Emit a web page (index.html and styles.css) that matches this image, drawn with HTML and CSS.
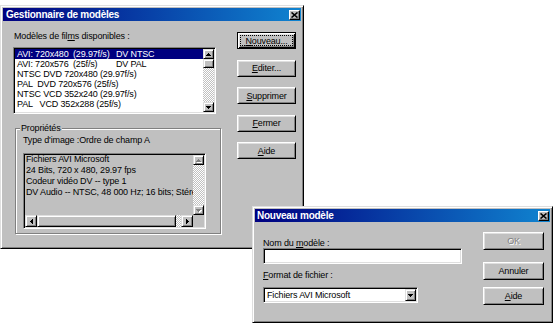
FILE: index.html
```html
<!DOCTYPE html>
<html lang="fr">
<head>
    <meta charset="UTF-8">
    <title>Gestionnaire de modèles</title>
    <link rel="stylesheet" href="styles.css">
</head>
<body>

    <div class="win main-win">
        <div class="titlebar">
            <span>Gestionnaire de modèles</span>
            <span class="close"><svg width="7" height="6" viewBox="0 0 7 6"><path d="M0.5 0.5L6.5 5.5M6.5 0.5L0.5 5.5" stroke="#000" stroke-width="1.6"/></svg></span>
        </div>
        <div class="main-body">
            <div class="left-col">
                <div class="lbl">Modèles de fil<u>m</u>s disponibles :</div>
                <div class="listbox">
                    <div class="rows">
                        <div class="row sel"><span class="c1">AVI: 720x480</span><span class="c2">(29.97f/s)</span>DV NTSC</div>
                        <div class="row"><span class="c1">AVI: 720x576</span><span class="c2">(25f/s)</span>DV PAL</div>
                        <div class="row">NTSC DVD 720x480 (29.97f/s)</div>
                        <div class="row">PAL  DVD 720x576 (25f/s)</div>
                        <div class="row">NTSC VCD 352x240 (29.97f/s)</div>
                        <div class="row">PAL   VCD 352x288 (25f/s)</div>
                    </div>
                    <div class="vscroll">
                        <div class="arrow"><svg width="5" height="3" viewBox="0 0 5 3"><path d="M2 0h1v1h1v1h1v1H0V2h1V1h1z"/></svg></div>
                        <div class="thumb"></div>
                        <div class="track"></div>
                        <div class="arrow"><svg width="5" height="3" viewBox="0 0 5 3"><path d="M0 0h5v1H4v1H3v1H2V2H1V1H0z"/></svg></div>
                    </div>
                </div>
                <fieldset class="group">
                    <legend>Propriétés</legend>
                    <div class="lbl">Type d'image :Ordre de champ A</div>
                    <div class="infobox">
                        <div class="info-text">
                            Fichiers AVI Microsoft<br>
                            24 Bits, 720 x 480, 29.97 fps<br>
                            Codeur vidéo DV -- type 1<br>
                            DV Audio -- NTSC, 48 000 Hz; 16 bits; Stéré
                        </div>
                        <div class="vscroll off">
                            <div class="arrow"><svg width="5" height="3" viewBox="0 0 5 3"><path d="M2 0h1v1h1v1h1v1H0V2h1V1h1z"/></svg></div>
                            <div class="track"></div>
                            <div class="arrow"><svg width="5" height="3" viewBox="0 0 5 3"><path d="M0 0h5v1H4v1H3v1H2V2H1V1H0z"/></svg></div>
                        </div>
                        <div class="hscroll">
                            <div class="arrow"><svg width="3" height="5" viewBox="0 0 3 5"><path d="M2 0h1v5H2V4H1V3H0V2h1V1h1z"/></svg></div>
                            <div class="thumb"></div>
                            <div class="track"></div>
                            <div class="arrow"><svg width="3" height="5" viewBox="0 0 3 5"><path d="M0 0h1v1h1v1h1v1H2v1H1v1H0z"/></svg></div>
                        </div>
                        <div class="sizebox"></div>
                    </div>
                </fieldset>
            </div>
            <div class="btn-col">
                <div class="btn default"><span class="focus"><u>N</u>ouveau...</span></div>
                <div class="btn"><u>E</u>diter...</div>
                <div class="btn"><u>S</u>upprimer</div>
                <div class="btn"><u>F</u>ermer</div>
                <div class="btn"><u>A</u>ide</div>
            </div>
        </div>
    </div>

    <div class="win new-win">
        <div class="titlebar">
            <span>Nouveau modèle</span>
            <span class="close"><svg width="7" height="6" viewBox="0 0 7 6"><path d="M0.5 0.5L6.5 5.5M6.5 0.5L0.5 5.5" stroke="#000" stroke-width="1.6"/></svg></span>
        </div>
        <div class="new-body">
            <div class="new-left">
                <div class="lbl">Nom du <u>m</u>odèle :</div>
                <div class="field"></div>
                <div class="lbl lbl-format"><u>F</u>ormat de fichier :</div>
                <div class="combo">
                    <span class="combo-text">Fichiers AVI Microsoft</span>
                    <span class="arrow"><svg width="5" height="3" viewBox="0 0 5 3"><path d="M0 0h5v1H4v1H3v1H2V2H1V1H0z"/></svg></span>
                </div>
            </div>
            <div class="new-right">
                <div class="btn btn-ok disabled">OK</div>
                <div class="btn btn-cancel">Annuler</div>
                <div class="btn btn-help"><u>A</u>ide</div>
            </div>
        </div>
    </div>

</body>
</html>
```

FILE: styles.css
```css
body { margin: 0; width: 554px; height: 323px; position: relative; overflow: hidden; background: #fff; color: #000; font-family: "Liberation Sans", Arial, sans-serif; font-size: 9px; letter-spacing: -0.15px; }
u { text-decoration: underline; text-underline-offset: 1px; }

/* windows */
.win { position: absolute; box-sizing: border-box; display: flex; flex-direction: column; padding: 2px; background: #c0c0c0; border: 1px solid; border-color: #dfdfdf #000 #000 #dfdfdf; box-shadow: inset 1px 1px #fff, inset -1px -1px #808080; }
.main-win { left: 0; top: 5px; width: 304px; height: 244px; }
.new-win { left: 252px; top: 206px; width: 301px; height: 117px; }

.titlebar { flex: none; height: 13px; display: flex; align-items: center; justify-content: space-between; padding: 0 1px 0 3px; background: linear-gradient(to right, #000080, #1084d0); color: #fff; font-weight: bold; font-size: 10px; letter-spacing: -0.25px; }
.new-win .titlebar { padding-left: 2px; }
.close { box-sizing: border-box; width: 11px; height: 10px; display: flex; align-items: center; justify-content: center; background: #c0c0c0; border: 1px solid; border-color: #fff #000 #000 #fff; box-shadow: inset -1px -1px #808080; }

/* bevels */
.btn, .arrow, .thumb { box-sizing: border-box; background: #c0c0c0; border: 1px solid; border-color: #dfdfdf #000 #000 #dfdfdf; box-shadow: inset 1px 1px #fff, inset -1px -1px #808080; }
.listbox, .infobox, .field, .combo { box-sizing: border-box; border: 1px solid; border-color: #808080 #fff #fff #808080; box-shadow: inset 1px 1px #000, inset -1px -1px #dfdfdf; padding: 1px; }

.lbl { line-height: 10px; white-space: nowrap; }

/* main window */
.main-body { display: grid; grid-template-columns: 207px 59px; column-gap: 17px; padding: 10px 0 0 10px; }
.left-col > .lbl { padding-left: 1px; }

.listbox { width: 203px; height: 67px; margin-top: 6px; display: flex; background: #fff; }
.rows { flex: 1; overflow: hidden; }
.row { height: 10px; line-height: 10px; padding-left: 2px; white-space: pre; }
.row.sel { background: #000080; color: #fff; }
.c1 { display: inline-block; width: 56px; }
.c2 { display: inline-block; width: 43px; }

.vscroll { flex: none; width: 11px; display: flex; flex-direction: column; background: repeating-conic-gradient(#c0c0c0 0 25%, #fff 0 50%) 0 0 / 2px 2px; }
.vscroll .arrow { height: 10px; }
.vscroll .thumb { height: 9px; }
.track { flex: 1; }
.arrow { flex: none; display: flex; align-items: center; justify-content: center; }
.off .arrow svg { fill: #808080; filter: drop-shadow(1px 1px 0 #fff); }

.group { box-sizing: border-box; width: 206px; height: 111px; margin: 9px 0 0 2px; padding: 2px 0 0 7px; border: 1px solid #808080; box-shadow: inset 1px 1px #fff, 1px 1px #fff; }
.group legend { margin-left: -3px; padding: 0 1px; line-height: 10px; background: #c0c0c0; }

.infobox { width: 183px; height: 76px; margin-top: 8px; display: grid; grid-template-columns: 1fr 11px; grid-template-rows: 1fr 12px; background: #c0c0c0; }
.info-text { line-height: 11px; margin-top: -1px; padding-left: 1px; white-space: nowrap; overflow: hidden; }
.hscroll { display: flex; background: repeating-conic-gradient(#c0c0c0 0 25%, #fff 0 50%) 0 0 / 2px 2px; }
.hscroll .arrow { width: 12px; }
.hscroll .thumb { width: 139px; }

.btn-col { display: flex; flex-direction: column; gap: 10.5px; margin-top: 1px; }
.btn { height: 17px; display: flex; align-items: center; justify-content: center; border-color: #fff #000 #000 #fff; box-shadow: inset 1px 1px #dfdfdf, inset -1px -1px #808080; white-space: nowrap; }
.btn.default { padding: 2px; border-color: #000; box-shadow: inset 1px 1px #fff, inset -1px -1px #000, inset 2px 2px #dfdfdf, inset -2px -2px #808080; }
.focus { flex: 1; align-self: stretch; display: flex; align-items: center; justify-content: center; border: 1px dotted #000; }

/* new model dialog */
.new-body { display: grid; grid-template-columns: 199px 61px; column-gap: 21px; padding-left: 8px; }
.new-left { padding-top: 16px; }
.field { height: 16px; background: #fff; }
.lbl-format { margin-top: 6px; }
.combo { width: 155px; height: 16px; margin-top: 7px; display: flex; align-items: stretch; background: #fff; }
.combo-text { flex: 1; padding-left: 2px; line-height: 12px; }
.combo .arrow { width: 11px; }

.new-right .btn { height: 18px; }
.btn-ok { margin-top: 10px; }
.btn-cancel { margin-top: 12px; }
.btn-help { margin-top: 7px; }
.disabled { color: #808080; text-shadow: 1px 1px 0 #fff; }
```
